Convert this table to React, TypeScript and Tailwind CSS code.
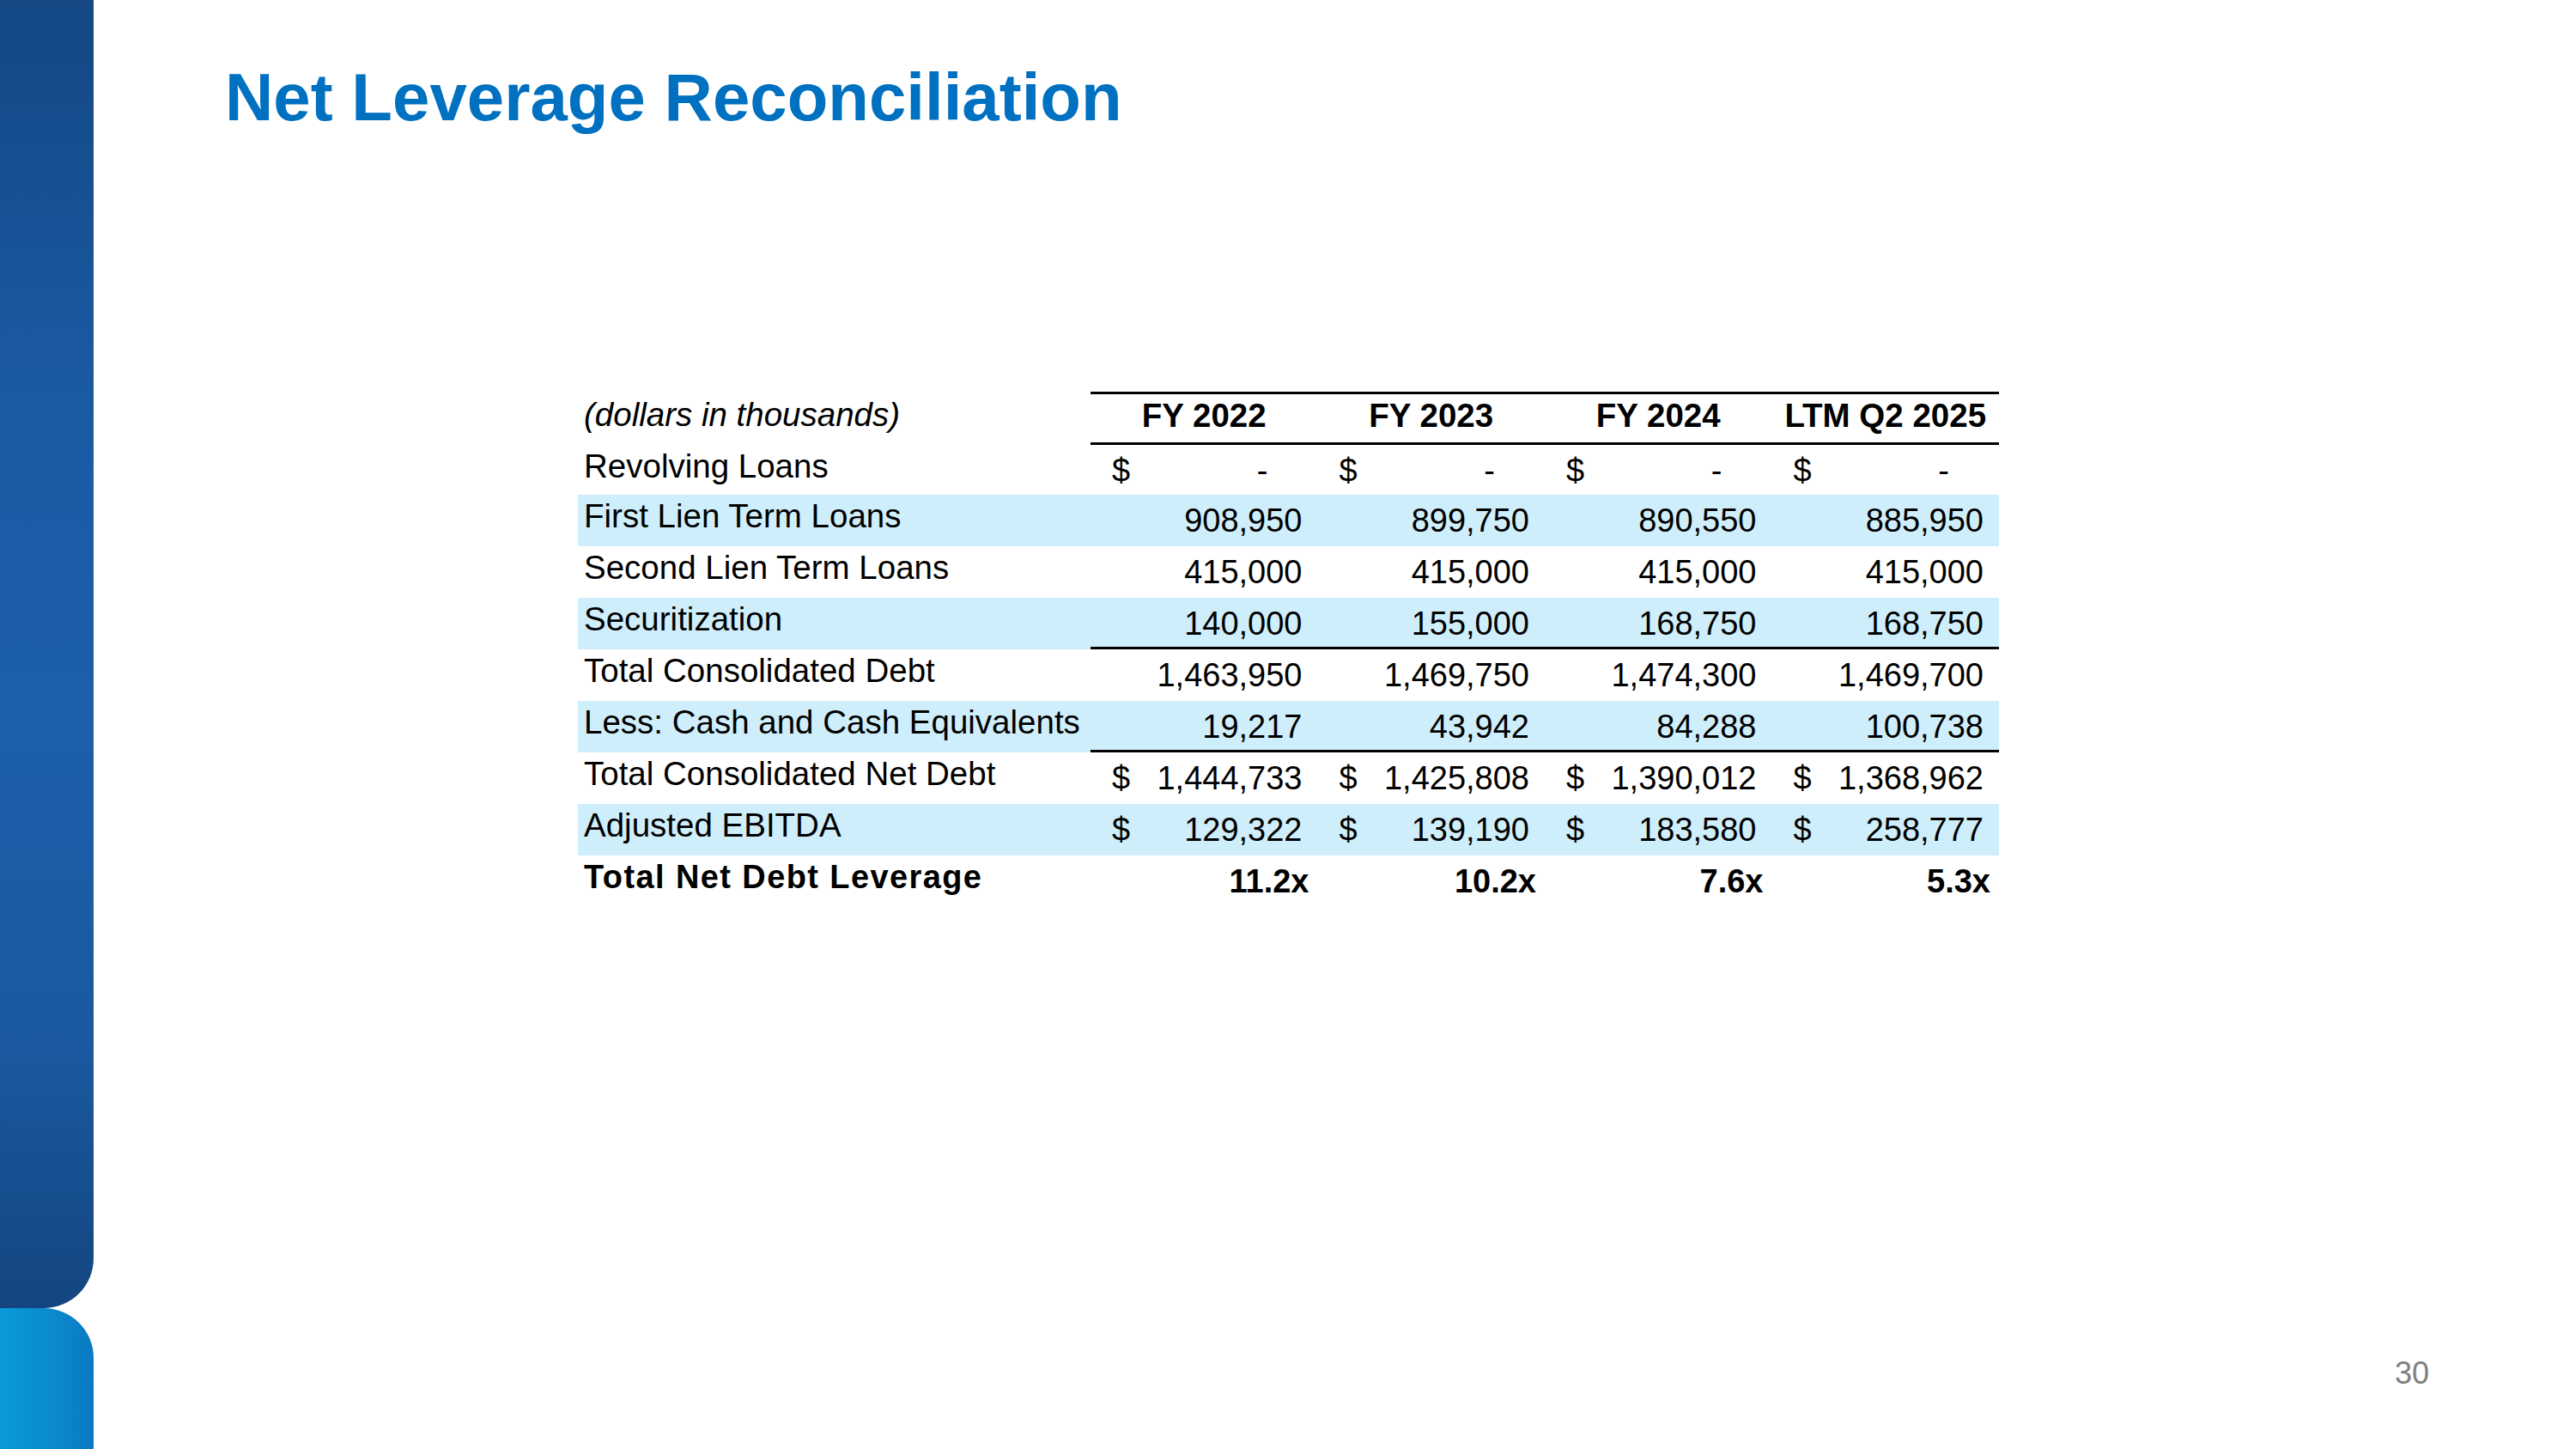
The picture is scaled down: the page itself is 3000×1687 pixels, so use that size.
import React from "react";

type Row = {
  label: string;
  vals: string[];
  dollar?: boolean;
  dash?: boolean;
  shade?: boolean;
  lineBelow?: boolean;
  bold?: boolean;
};

const rows: Row[] = [
  { label: "Revolving Loans", vals: ["-", "-", "-", "-"], dollar: true, dash: true },
  { label: "First Lien Term Loans", vals: ["908,950", "899,750", "890,550", "885,950"], shade: true },
  { label: "Second Lien Term Loans", vals: ["415,000", "415,000", "415,000", "415,000"] },
  { label: "Securitization", vals: ["140,000", "155,000", "168,750", "168,750"], shade: true, lineBelow: true },
  { label: "Total Consolidated Debt", vals: ["1,463,950", "1,469,750", "1,474,300", "1,469,700"] },
  { label: "Less: Cash and Cash Equivalents", vals: ["19,217", "43,942", "84,288", "100,738"], shade: true, lineBelow: true },
  { label: "Total Consolidated Net Debt", vals: ["1,444,733", "1,425,808", "1,390,012", "1,368,962"], dollar: true },
  { label: "Adjusted EBITDA", vals: ["129,322", "139,190", "183,580", "258,777"], dollar: true, shade: true },
  { label: "Total Net Debt Leverage", vals: ["11.2x", "10.2x", "7.6x", "5.3x"], bold: true },
];

const headers = ["FY 2022", "FY 2023", "FY 2024", "LTM Q2 2025"];

function ValueCell({ row, v }: { row: Row; v: string }) {
  const border = row.lineBelow ? "border-b-[3px] border-black" : "";
  if (row.bold) {
    return (
      <div className={`flex h-full items-start justify-end pt-[11px] pr-[10px] text-[38px] leading-none font-bold ${border}`}>
        {v}
      </div>
    );
  }
  return (
    <div className={`flex h-full items-start justify-between pt-[11px] pl-[25px] text-[38px] leading-none ${border}`}>
      <span>{row.dollar ? "$" : ""}</span>
      <span className={row.dash ? "pr-[58px]" : "pr-[18px]"}>{v}</span>
    </div>
  );
}

export default function App() {
  return (
    <div
      className="flex h-[1687px] w-[3000px] overflow-hidden bg-white text-black"
      style={{ fontFamily: '"Liberation Sans", Arial, sans-serif' }}
    >
      <div className="flex w-[109px] shrink-0 flex-col">
        <div className="h-[1523px] rounded-br-[58px] bg-[linear-gradient(180deg,#144784_0%,#1a5aa3_30%,#1c5faa_55%,#1a59a0_80%,#144580_100%)]" />
        <div className="flex-1 rounded-tr-[58px] bg-[linear-gradient(90deg,#099bd9_0%,#0a8ccf_50%,#0b79c2_100%)]" />
      </div>

      <div className="flex flex-1 flex-col">
        <h1 className="pt-[74px] pl-[153px] text-[78px] leading-none font-bold text-[#0070c0]">
          Net Leverage Reconciliation
        </h1>

        <div className="mt-[304px] ml-[564px] grid w-[1655px] grid-cols-[597px_repeat(4,264.5px)]">
          <div className="h-[62px] pt-[8px] pl-[7px] text-[38.5px] leading-none italic">(dollars in thousands)</div>
          {headers.map((h) => (
            <div
              key={h}
              className="flex h-[62px] items-start justify-center border-t-[3px] border-b-[3px] border-black pt-[6px] text-[38.5px] leading-none font-bold"
            >
              {h}
            </div>
          ))}

          {rows.map((row, i) => (
            <div
              key={row.label}
              className={`col-span-5 grid grid-cols-subgrid ${i === 0 ? "h-[58px]" : "h-[60px]"} ${row.shade ? "bg-[#cfeefb]" : ""}`}
            >
              <div
                className={`pt-[6px] pl-[7px] leading-none whitespace-nowrap ${row.bold ? "text-[38px] font-bold tracking-[1.4px]" : "text-[38.5px]"}`}
              >
                {row.label}
              </div>
              {row.vals.map((v, j) => (
                <ValueCell key={j} row={row} v={v} />
              ))}
            </div>
          ))}
        </div>

        <div className="flex-1" />
        <div className="flex justify-end pr-[171px] pb-[70px] text-[36px] leading-none text-[#808080]">30</div>
      </div>
    </div>
  );
}
